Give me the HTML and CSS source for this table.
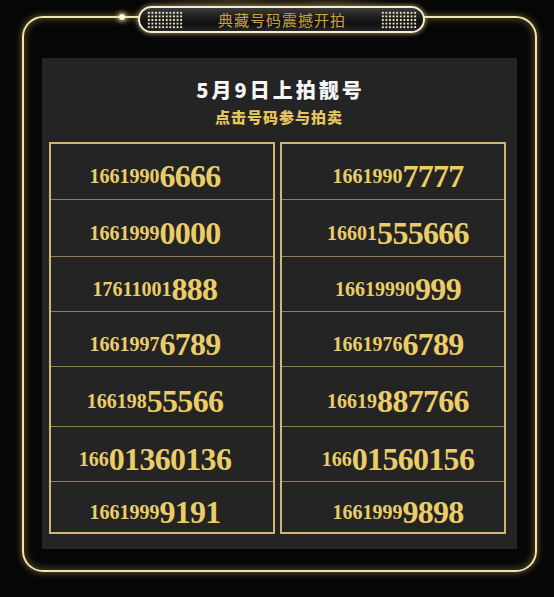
FILE: index.html
```html
<!DOCTYPE html>
<html lang="zh">
<head>
<meta charset="utf-8">
<title>典藏号码震撼开拍</title>
<link rel="stylesheet" href="styles.css">
</head>
<body>
<div class="frame">
  <span class="dot"></span>
  <div class="badge">
    <span class="leds"></span>
    <span class="badge-text">典藏号码震撼开拍</span>
    <span class="leds"></span>
  </div>
  <div class="panel">
    <h1 class="title">5月9日上拍靓号</h1>
    <p class="subtitle">点击号码参与拍卖</p>
    <div class="grid">
      <div class="col col-left">
        <div class="cell"><span class="sm">1661990</span><span class="lg">6666</span></div>
        <div class="cell"><span class="sm">1661999</span><span class="lg">0000</span></div>
        <div class="cell"><span class="sm">17611001</span><span class="lg">888</span></div>
        <div class="cell"><span class="sm">1661997</span><span class="lg">6789</span></div>
        <div class="cell"><span class="sm">166198</span><span class="lg">55566</span></div>
        <div class="cell"><span class="sm">166</span><span class="lg">01360136</span></div>
        <div class="cell"><span class="sm">1661999</span><span class="lg">9191</span></div>
      </div>
      <div class="col col-right">
        <div class="cell"><span class="sm">1661990</span><span class="lg">7777</span></div>
        <div class="cell"><span class="sm">16601</span><span class="lg">555666</span></div>
        <div class="cell"><span class="sm">16619990</span><span class="lg">999</span></div>
        <div class="cell"><span class="sm">1661976</span><span class="lg">6789</span></div>
        <div class="cell"><span class="sm">16619</span><span class="lg">887766</span></div>
        <div class="cell"><span class="sm">166</span><span class="lg">01560156</span></div>
        <div class="cell"><span class="sm">1661999</span><span class="lg">9898</span></div>
      </div>
    </div>
  </div>
</div>
</body>
</html>
```

FILE: styles.css
```css
* { box-sizing: border-box; }

html, body {
  margin: 0;
  padding: 0;
}

body {
  width: 554px;
  height: 597px;
  overflow: hidden;
  background:
    radial-gradient(ellipse 90px 10px at 230px 0px, rgba(150,120,60,0.35), transparent),
    radial-gradient(ellipse 60px 8px at 330px 2px, rgba(150,120,60,0.3), transparent),
    #060606;
  font-family: "Noto Sans CJK SC", "Noto Sans", sans-serif;
}

.frame {
  position: relative;
  margin: 16px 0 0 22px;
  width: 515px;
  border: 2px solid #efe4b4;
  border-radius: 21px;
  padding: 40px 18px 21px 18px;
  box-shadow:
    0 0 7px rgba(220, 190, 90, 0.55),
    inset 0 0 8px rgba(220, 190, 90, 0.45);
}

.dot {
  position: absolute;
  left: 95px;
  top: -4px;
  width: 6px;
  height: 6px;
  border-radius: 50%;
  background: #fffbe8;
  box-shadow: 0 0 4px 2px rgba(240, 220, 150, 0.7);
}

.badge {
  position: absolute;
  left: 114px;
  top: -12px;
  width: 287px;
  height: 27px;
  border: 2px solid #f4edd2;
  border-radius: 14px;
  background: linear-gradient(180deg, #3b3b3b 0%, #1a1a1a 45%, #101010 70%, #262626 100%);
  box-shadow: 0 0 4px 1px rgba(240, 220, 150, 0.55);
  display: flex;
  align-items: center;
  justify-content: space-between;
  padding: 0 6px 0 7px;
}

.leds {
  width: 36px;
  height: 18px;
  background-image: radial-gradient(circle at center, #efe6c4 0 0.9px, rgba(239,230,196,0.25) 1.2px, transparent 1.5px);
  background-size: 3.6px 3.6px;
}

.badge-text {
  color: #c9a144;
  font-size: 15px;
  letter-spacing: 1px;
  line-height: 20px;
}

.panel {
  background: #242424;
  padding: 20px 11px 15px 7px;
}

.title {
  margin: 0;
  text-align: center;
  color: #f6f6f6;
  font-size: 20px;
  font-weight: 900;
  line-height: 24px;
  letter-spacing: 3px;
  padding-left: 6px;
}

.subtitle {
  margin: 5px 0 15px;
  text-align: center;
  color: #e7c55c;
  font-size: 15px;
  font-weight: 900;
  line-height: 20px;
  letter-spacing: 1px;
  padding-left: 3px;
}

.grid {
  display: grid;
  grid-template-columns: 226px 226px;
  column-gap: 5px;
}

.col {
  border: 2px solid #cdb772;
  display: grid;
  grid-template-rows: 56px 57px 55px 55px 60px 55px 50px;
}

.cell {
  display: flex;
  align-items: center;
  justify-content: center;
  padding-top: 10px;
  border-bottom: 1px solid #8f7f52;
  font-family: "Liberation Serif", "Times New Roman", serif;
  font-weight: 700;
  color: #eacd69;
  white-space: nowrap;
}

.cell:last-child { border-bottom: none; }

.col-left .cell { padding-right: 14px; }
.col-right .cell { padding-left: 10px; }

.sm {
  font-size: 20px;
}

.lg {
  font-size: 32px;
  letter-spacing: -0.7px;
}
```
